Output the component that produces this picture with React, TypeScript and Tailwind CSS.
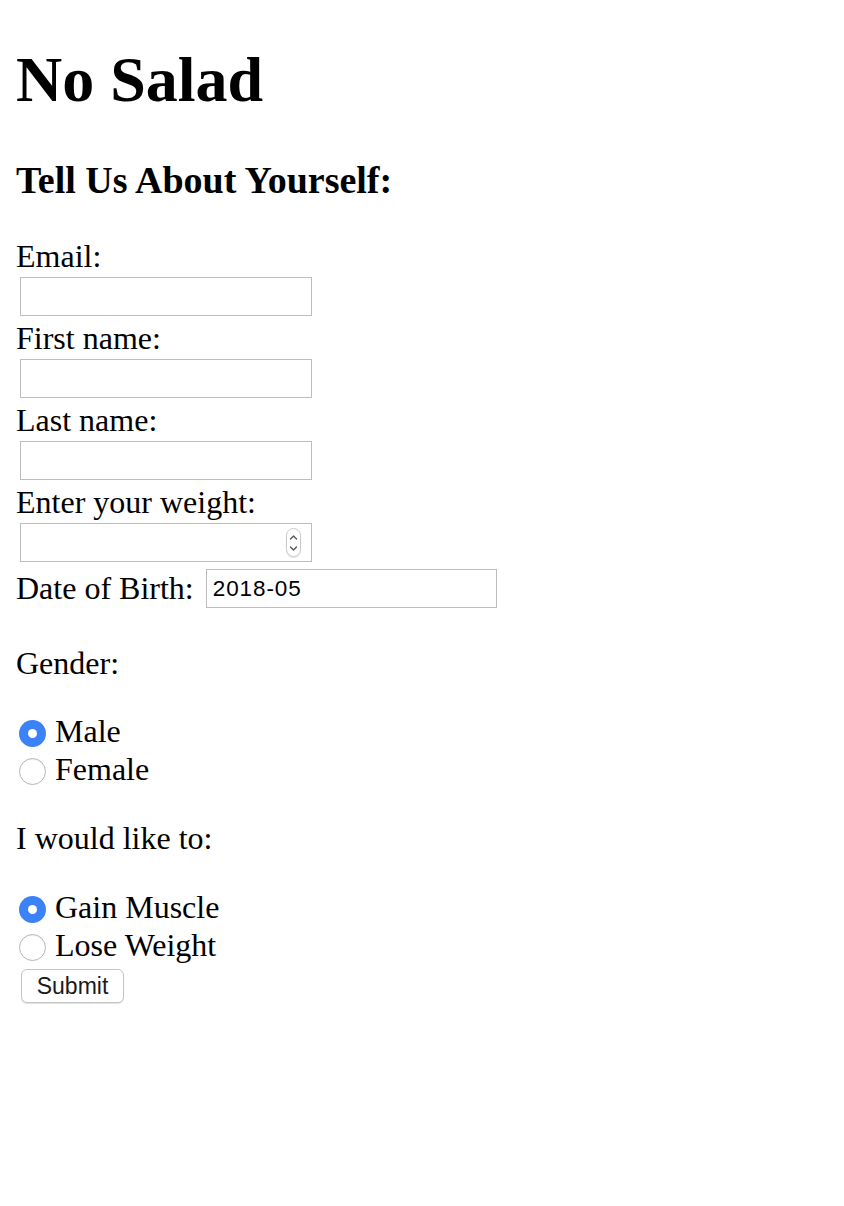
import { useState } from "react";

function Radio({ checked, onClick }: { checked: boolean; onClick: () => void }) {
  return (
    <button
      type="button"
      onClick={onClick}
      className={
        checked
          ? "mt-[8px] ml-[3px] flex h-[27px] w-[27px] shrink-0 items-center justify-center rounded-full bg-[#3b82f6]"
          : "mt-[8px] ml-[3px] h-[27px] w-[27px] shrink-0 rounded-full border border-[#b5b5b5] bg-white shadow-[inset_0_1px_1px_rgba(0,0,0,0.06)]"
      }
    >
      {checked && <span className="h-[9px] w-[9px] rounded-full bg-white" />}
    </button>
  );
}

function TextBox({ type = "text" }: { type?: string }) {
  return (
    <input
      type={type}
      className="mt-[2px] ml-[4px] block h-[39px] w-[292px] border border-[#bdbdbd] bg-white px-2 text-[22px] outline-none"
    />
  );
}

export default function App() {
  const [gender, setGender] = useState("male");
  const [goal, setGoal] = useState("gain");

  return (
    <div className="min-h-screen bg-white px-4 pt-[43px] font-['Liberation_Serif',serif] text-black">
      <h1 className="text-[64px] leading-[74px] font-bold">No Salad</h1>
      <h3 className="mt-[42px] text-[38px] leading-[43px] font-bold">
        Tell Us About Yourself:
      </h3>

      <form onSubmit={(e) => e.preventDefault()}>
        <div className="mt-[36px] text-[32px] leading-[37px]">Email:</div>
        <TextBox type="email" />

        <div className="mt-[4px] text-[32px] leading-[37px]">First name:</div>
        <TextBox />

        <div className="mt-[4px] text-[32px] leading-[37px]">Last name:</div>
        <TextBox />

        <div className="mt-[4px] text-[32px] leading-[37px]">Enter your weight:</div>
        <div className="mt-[2px] ml-[4px] flex h-[39px] w-[292px] items-center border border-[#bdbdbd] bg-white pr-[10px]">
          <input
            type="text"
            inputMode="numeric"
            className="h-full min-w-0 flex-1 px-2 text-[22px] outline-none"
          />
          <div className="flex h-[29px] w-[15px] flex-col items-center justify-center rounded-full border border-[#c8c8c8] shadow-[0_1px_1px_rgba(0,0,0,0.12)]">
            <svg width="9" height="22" viewBox="0 0 9 22" fill="none" stroke="#555" strokeWidth="1.4" strokeLinecap="round" strokeLinejoin="round">
              <path d="M1.5 7 L4.5 4 L7.5 7" />
              <path d="M1.5 15 L4.5 18 L7.5 15" />
            </svg>
          </div>
        </div>

        <div className="mt-[7px] flex h-[39px] items-center text-[32px] leading-[37px]">
          <span>Date of Birth:</span>
          <input
            type="text"
            defaultValue="2018-05"
            className="ml-[12px] h-[39px] w-[291px] border border-[#bdbdbd] bg-white px-[6px] font-['Liberation_Sans',sans-serif] text-[22.5px] tracking-[0.9px] outline-none"
          />
        </div>

        <p className="mt-[37px] text-[32px] leading-[37px]">Gender:</p>

        <div className="mt-[30px] text-[32px]">
          <label className="flex h-[38px] items-start gap-[9px] leading-[38px]">
            <Radio checked={gender === "male"} onClick={() => setGender("male")} />
            <span>Male</span>
          </label>
          <label className="flex h-[38px] items-start gap-[9px] leading-[38px]">
            <Radio checked={gender === "female"} onClick={() => setGender("female")} />
            <span>Female</span>
          </label>
        </div>

        <p className="mt-[32px] text-[32px] leading-[37px]">I would like to:</p>

        <div className="mt-[31px] text-[32px]">
          <label className="flex h-[38px] items-start gap-[9px] leading-[38px]">
            <Radio checked={goal === "gain"} onClick={() => setGoal("gain")} />
            <span>Gain Muscle</span>
          </label>
          <label className="flex h-[38px] items-start gap-[9px] leading-[38px]">
            <Radio checked={goal === "lose"} onClick={() => setGoal("lose")} />
            <span>Lose Weight</span>
          </label>
        </div>

        <button
          type="submit"
          className="mt-[5px] ml-[5px] h-[34px] w-[103px] rounded-[6px] border border-[#c4c4c4] bg-white font-['Liberation_Sans',sans-serif] text-[23px] leading-[32px] text-[#1a1a1a] shadow-[0_1px_1px_rgba(0,0,0,0.12)]"
        >
          Submit
        </button>
      </form>
    </div>
  );
}
